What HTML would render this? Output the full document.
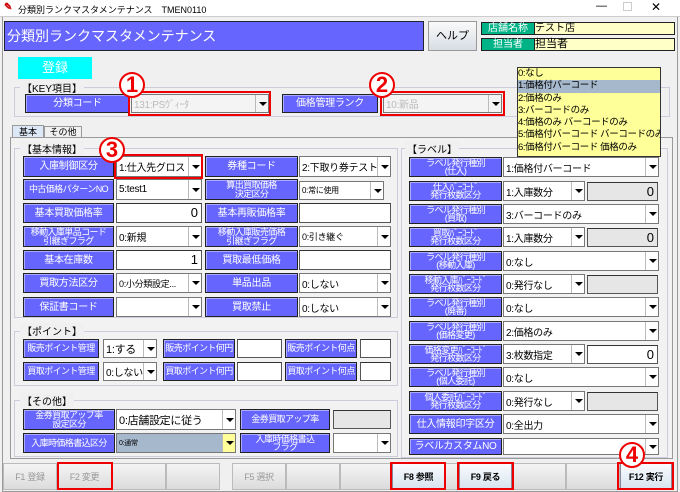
<!DOCTYPE html>
<html><head><meta charset="utf-8">
<style>
*{box-sizing:border-box;margin:0;padding:0}
body{width:680px;height:492px;overflow:hidden;background:#f0f0f0;font-family:"Liberation Sans","Noto Sans CJK JP",sans-serif;font-size:10px;position:relative;color:#000}
div{position:absolute}
.l{background:#6666ff;color:#fff;border:1px solid #222;box-shadow:inset 1px 1px 0 #aaf;text-align:center;display:flex;align-items:center;justify-content:center;line-height:9px;font-size:10px;letter-spacing:-0.3px;white-space:nowrap;overflow:hidden}
.l.s{font-size:9px;line-height:8.5px;letter-spacing:-0.6px}
.c{background:#fff;border:1px solid #777;display:flex;align-items:center;padding-left:2px;font-size:10px;letter-spacing:-0.3px;white-space:nowrap;overflow:hidden}
.c .a{position:absolute;right:0;top:0;bottom:0;width:13px;border-left:1px solid #bbb;background:#fff}
.c .a:after{content:"";position:absolute;left:3px;top:50%;margin-top:-2px;border-left:4px solid transparent;border-right:4px solid transparent;border-top:4px solid #000}
.t{background:#fff;border:1px solid #555;border-top-color:#333;text-align:right;padding-right:3px;font-size:13px;line-height:18px}
.g{background:#e6e6e6}
.grp{border:1px solid #ccd;}
.gl{background:#f0f0f0;padding:0 2px;font-size:10px}
.red{border:2px solid #e00}
.num{color:#e00;font-weight:bold;font-size:22px;line-height:22px;width:26px;height:26px;border:2.5px solid #e00;border-radius:50%;background:#fff;text-align:center;display:flex;align-items:center;justify-content:center}
.b{background:linear-gradient(#f4f4f4,#dcdcdc);border:1px solid #bbb;text-align:center;font-size:9px;color:#999;line-height:26px;letter-spacing:-0.3px}
.b2{background:linear-gradient(#fafcff,#d6e2ee);border:1px solid #889;color:#000;font-weight:bold}
</style></head><body>
<div style="left:0;top:0;width:680px;height:17px;background:#fff;border-bottom:1px solid #ccc"></div>
<div style="left:4px;top:2px;font-size:10px;color:#c00;font-weight:bold">✎</div>
<div style="left:18px;top:3px;font-size:9px">分類別ランクマスタメンテナンス　TMEN0110</div>
<div style="left:596px;top:0;font-size:11px">—</div>
<div style="left:623px;top:2px;width:9px;height:9px;border:1px solid #ccc"></div>
<div style="left:651px;top:0;font-size:12px">✕</div>
<div style="left:2px;top:17px;width:676px;height:475px;border:1px solid #999;border-top:none"></div>
<div style="left:4px;top:21px;width:420px;height:30px;background:#6666ff;border:1px solid #223;color:#fff;font-size:14px;line-height:28px;padding-left:2px">分類別ランクマスタメンテナンス</div>
<div style="left:428px;top:21px;width:49px;height:30px;background:linear-gradient(#fafafa,#d8dde4);border:1px solid #999;text-align:center;line-height:28px;font-size:11px">ヘルプ</div>
<div style="left:481px;top:22px;width:54px;height:13px;background:#00b386;color:#fff;border:1px solid #222;text-align:center;font-size:10px;line-height:11px">店舗名称</div>
<div style="left:534px;top:22px;width:141px;height:13px;background:#ffffc8;border:1px solid #222;font-size:10px;line-height:11px">テスト店</div>
<div style="left:481px;top:38px;width:54px;height:13px;background:#00b386;color:#fff;border:1px solid #222;text-align:center;font-size:10px;line-height:11px">担当者</div>
<div style="left:534px;top:38px;width:141px;height:13px;background:#ffffc8;border:1px solid #222;font-size:11px;line-height:11px">担当者</div>
<div style="left:18px;top:57px;width:74px;height:22px;background:#00ffff;color:#fff;font-size:13px;text-align:center;line-height:22px">登録</div>
<div class="grp" style="left:14px;top:87px;width:656px;height:30px"></div>
<div class="gl" style="left:20px;top:80px">【KEY項目】</div>
<div class="l" style="left:25px;top:94px;width:105px;height:19px">分類コード</div>
<div class="c" style="left:131px;top:94px;width:138px;height:19px;color:#bbb;background:#f4f4f4">131:PSｳﾞｨｰﾀ<span class="a" style="background:#f4f4f4"></span></div>
<div class="red" style="left:128px;top:91px;width:143px;height:25px"></div>
<div class="l" style="left:282px;top:94px;width:96px;height:19px">価格管理ランク</div>
<div class="c" style="left:383px;top:94px;width:119px;height:19px;color:#bbb;background:#f4f4f4">10:新品<span class="a" style="background:#f4f4f4"></span></div>
<div class="red" style="left:380px;top:91px;width:125px;height:25px"></div>
<div class="num" style="left:119px;top:72px">1</div>
<div class="num" style="left:369px;top:72px">2</div>
<div style="left:12px;top:125px;width:32px;height:13px;background:#dce8f6;border:1px solid #999;border-bottom:none;text-align:center;font-size:9px;line-height:12px">基本</div>
<div style="left:44px;top:126px;width:38px;height:12px;background:#f0f0f0;border:1px solid #999;border-bottom:none;text-align:center;font-size:9px;line-height:11px">その他</div>
<div style="left:10px;top:137px;width:663px;height:322px;border:1px solid #999;background:#f2f2f2"></div>
<div class="grp" style="left:14px;top:148px;width:384px;height:170px"></div>
<div class="gl" style="left:20px;top:141px">【基本情報】</div>
<div class="l" style="left:23px;top:156px;width:91px;height:21px">入庫制御区分</div>
<div class="c" style="left:116px;top:156px;width:86px;height:21px">1:仕入先グロス<span class="a"></span></div>
<div class="red" style="left:114px;top:154px;width:89px;height:25px"></div>
<div class="l" style="left:205px;top:156px;width:93px;height:21px">券種コード</div>
<div class="c" style="left:299px;top:156px;width:92px;height:21px">2:下取り券テスト<span class="a"></span></div>
<div class="l s" style="left:23px;top:179px;width:91px;height:21px">中古価格パターンNO</div>
<div class="c" style="left:116px;top:179px;width:86px;height:21px">5:test1<span class="a"></span></div>
<div class="l s" style="left:205px;top:179px;width:93px;height:21px">算出買取価格<br>決定区分</div>
<div class="c" style="left:299px;top:181px;width:85px;height:19px;font-size:8px">0:常に使用<span class="a"></span></div>
<div class="l" style="left:23px;top:203px;width:91px;height:20px">基本買取価格率</div>
<div class="t" style="left:116px;top:203px;width:86px;height:20px">0</div>
<div class="l" style="left:205px;top:203px;width:93px;height:20px">基本再販価格率</div>
<div class="t" style="left:299px;top:203px;width:92px;height:20px"></div>
<div class="l s" style="left:23px;top:226px;width:91px;height:21px">移動入庫単品コード<br>引継ぎフラグ</div>
<div class="c" style="left:116px;top:226px;width:86px;height:21px">0:新規<span class="a"></span></div>
<div class="l s" style="left:205px;top:226px;width:93px;height:21px">移動入庫販売価格<br>引継ぎフラグ</div>
<div class="c" style="left:299px;top:226px;width:92px;height:21px;font-size:9px">0:引き継ぐ<span class="a"></span></div>
<div class="l" style="left:23px;top:250px;width:91px;height:20px">基本在庫数</div>
<div class="t" style="left:116px;top:250px;width:86px;height:20px">1</div>
<div class="l" style="left:205px;top:250px;width:93px;height:20px">買取最低価格</div>
<div class="t" style="left:299px;top:250px;width:92px;height:20px"></div>
<div class="l" style="left:23px;top:273px;width:91px;height:20px">買取方法区分</div>
<div class="c" style="left:116px;top:273px;width:86px;height:20px;font-size:9px">0:小分類設定...<span class="a"></span></div>
<div class="l" style="left:205px;top:273px;width:93px;height:20px">単品出品</div>
<div class="c" style="left:299px;top:273px;width:92px;height:20px">0:しない<span class="a"></span></div>
<div class="l" style="left:23px;top:297px;width:91px;height:20px">保証書コード</div>
<div class="c" style="left:116px;top:297px;width:86px;height:20px"><span class="a"></span></div>
<div class="l" style="left:205px;top:297px;width:93px;height:20px">買取禁止</div>
<div class="c" style="left:299px;top:297px;width:92px;height:20px">0:しない<span class="a"></span></div>
<div class="grp" style="left:14px;top:331px;width:384px;height:55px"></div>
<div class="gl" style="left:20px;top:323px">【ポイント】</div>
<div class="l s" style="left:23px;top:339px;width:76px;height:19px">販売ポイント管理</div>
<div class="c" style="left:103px;top:339px;width:54px;height:19px;font-size:11px">1:する<span class="a"></span></div>
<div class="l s" style="left:163px;top:339px;width:72px;height:19px">販売ポイント何円</div>
<div class="t" style="left:237px;top:339px;width:45px;height:19px"></div>
<div class="l s" style="left:285px;top:339px;width:72px;height:19px">販売ポイント何点</div>
<div class="t" style="left:360px;top:339px;width:31px;height:19px"></div>
<div class="l s" style="left:23px;top:362px;width:76px;height:19px">買取ポイント管理</div>
<div class="c" style="left:103px;top:362px;width:54px;height:19px;font-size:10px">0:しない<span class="a"></span></div>
<div class="l s" style="left:163px;top:362px;width:72px;height:19px">買取ポイント何円</div>
<div class="t" style="left:237px;top:362px;width:45px;height:19px"></div>
<div class="l s" style="left:285px;top:362px;width:72px;height:19px">買取ポイント何点</div>
<div class="t" style="left:360px;top:362px;width:31px;height:19px"></div>
<div class="grp" style="left:14px;top:400px;width:384px;height:57px"></div>
<div class="gl" style="left:20px;top:393px">【その他】</div>
<div class="l s" style="left:23px;top:409px;width:92px;height:21px">金券買取アップ率<br>設定区分</div>
<div class="c" style="left:116px;top:409px;width:120px;height:21px;font-size:11px">0:店舗設定に従う<span class="a"></span></div>
<div class="l s" style="left:240px;top:409px;width:90px;height:21px">金券買取アップ率</div>
<div class="t g" style="left:333px;top:410px;width:58px;height:19px"></div>
<div class="l s" style="left:23px;top:433px;width:92px;height:20px">入庫時価格書込区分</div>
<div class="c" style="left:116px;top:433px;width:120px;height:20px;background:#a6b8cc;font-size:7px">0:通常<span class="a" style="background:#ffff99"></span></div>
<div class="l s" style="left:240px;top:433px;width:90px;height:20px">入庫時価格書込<br>フラグ</div>
<div class="c" style="left:333px;top:433px;width:58px;height:20px"><span class="a"></span></div>
<div class="grp" style="left:401px;top:148px;width:267px;height:310px"></div>
<div class="gl" style="left:405px;top:141px">【ラベル】</div>
<div class="l s" style="left:409px;top:157px;width:93px;height:20px">ラベル発行種別<br>(仕入)</div>
<div class="c" style="left:503px;top:157px;width:156px;height:20px">1:価格付バーコード<span class="a"></span></div>
<div class="l s" style="left:409px;top:181px;width:93px;height:20px">仕入ﾊﾞｰｺｰﾄﾞ<br>発行枚数区分</div>
<div class="c" style="left:503px;top:181px;width:82px;height:20px">1:入庫数分<span class="a"></span></div>
<div class="t g" style="left:587px;top:182px;width:71px;height:19px">0</div>
<div class="l s" style="left:409px;top:204px;width:93px;height:20px">ラベル発行種別<br>(買取)</div>
<div class="c" style="left:503px;top:204px;width:156px;height:20px">3:バーコードのみ<span class="a"></span></div>
<div class="l s" style="left:409px;top:227px;width:93px;height:20px">買取ﾊﾞｰｺｰﾄﾞ<br>発行枚数区分</div>
<div class="c" style="left:503px;top:227px;width:82px;height:20px">1:入庫数分<span class="a"></span></div>
<div class="t g" style="left:587px;top:228px;width:71px;height:19px">0</div>
<div class="l s" style="left:409px;top:251px;width:93px;height:20px">ラベル発行種別<br>(移動入庫)</div>
<div class="c" style="left:503px;top:251px;width:156px;height:20px">0:なし<span class="a"></span></div>
<div class="l s" style="left:409px;top:274px;width:93px;height:20px">移動入庫ﾊﾞｰｺｰﾄﾞ<br>発行枚数区分</div>
<div class="c" style="left:503px;top:274px;width:82px;height:20px">0:発行なし<span class="a"></span></div>
<div class="t g" style="left:587px;top:275px;width:71px;height:19px"></div>
<div class="l s" style="left:409px;top:297px;width:93px;height:20px">ラベル発行種別<br>(廃番)</div>
<div class="c" style="left:503px;top:297px;width:156px;height:20px">0:なし<span class="a"></span></div>
<div class="l s" style="left:409px;top:321px;width:93px;height:20px">ラベル発行種別<br>(価格変更)</div>
<div class="c" style="left:503px;top:321px;width:156px;height:20px">2:価格のみ<span class="a"></span></div>
<div class="l s" style="left:409px;top:344px;width:93px;height:20px">価格変更ﾊﾞｰｺｰﾄﾞ<br>発行枚数区分</div>
<div class="c" style="left:503px;top:344px;width:82px;height:20px">3:枚数指定<span class="a"></span></div>
<div class="t" style="left:587px;top:345px;width:71px;height:19px">0</div>
<div class="l s" style="left:409px;top:367px;width:93px;height:20px">ラベル発行種別<br>(個人委託)</div>
<div class="c" style="left:503px;top:367px;width:156px;height:20px">0:なし<span class="a"></span></div>
<div class="l s" style="left:409px;top:391px;width:93px;height:20px">個人委託ﾊﾞｰｺｰﾄﾞ<br>発行枚数区分</div>
<div class="c" style="left:503px;top:391px;width:82px;height:20px">0:発行なし<span class="a"></span></div>
<div class="t g" style="left:587px;top:392px;width:71px;height:19px"></div>
<div class="l" style="left:409px;top:414px;width:93px;height:20px">仕入情報印字区分</div>
<div class="c" style="left:503px;top:414px;width:156px;height:20px">0:全出力<span class="a"></span></div>
<div class="l" style="left:409px;top:438px;width:93px;height:17px">ラベルカスタムNO</div>
<div class="c" style="left:503px;top:438px;width:156px;height:17px"><span class="a"></span></div>
<div style="left:517px;top:67px;width:144px;height:90px;background:#ffff99;border:1px solid #333;font-size:9.5px;letter-spacing:-0.4px;line-height:12.3px;white-space:nowrap;overflow:hidden">
<div style="position:static">0:なし</div>
<div style="position:static;background:#a6b8cc">1:価格付バーコード</div>
<div style="position:static">2:価格のみ</div>
<div style="position:static">3:バーコードのみ</div>
<div style="position:static">4:価格のみ バーコードのみ</div>
<div style="position:static">5:価格付バーコード バーコードのみ</div>
<div style="position:static">6:価格付バーコード 価格のみ</div>
</div>
<div class="num" style="left:99px;top:137px">3</div>
<div class="b" style="left:3px;top:463px;width:54px;height:27px">F1 登録</div>
<div class="b" style="left:57px;top:463px;width:55px;height:27px">F2 変更</div>
<div class="b" style="left:112px;top:463px;width:54px;height:27px"></div>
<div class="b" style="left:166px;top:463px;width:54px;height:27px"></div>
<div class="b" style="left:232px;top:463px;width:54px;height:27px">F5 選択</div>
<div class="b" style="left:286px;top:463px;width:54px;height:27px"></div>
<div class="b" style="left:340px;top:463px;width:52px;height:27px"></div>
<div class="b b2" style="left:392px;top:463px;width:53px;height:27px">F8 参照</div>
<div class="b" style="left:445px;top:463px;width:14px;height:27px"></div>
<div class="b b2" style="left:459px;top:463px;width:53px;height:27px">F9 戻る</div>
<div class="b" style="left:512px;top:463px;width:54px;height:27px"></div>
<div class="b" style="left:566px;top:463px;width:54px;height:27px"></div>
<div class="b b2" style="left:620px;top:463px;width:52px;height:27px">F12 実行</div>
<div class="red" style="left:57px;top:462px;width:56px;height:28px"></div>
<div class="red" style="left:390px;top:462px;width:56px;height:28px"></div>
<div class="red" style="left:457px;top:462px;width:57px;height:28px"></div>
<div class="red" style="left:617px;top:462px;width:57px;height:28px"></div>
<div class="num" style="left:619px;top:442px">4</div>
</body></html>
